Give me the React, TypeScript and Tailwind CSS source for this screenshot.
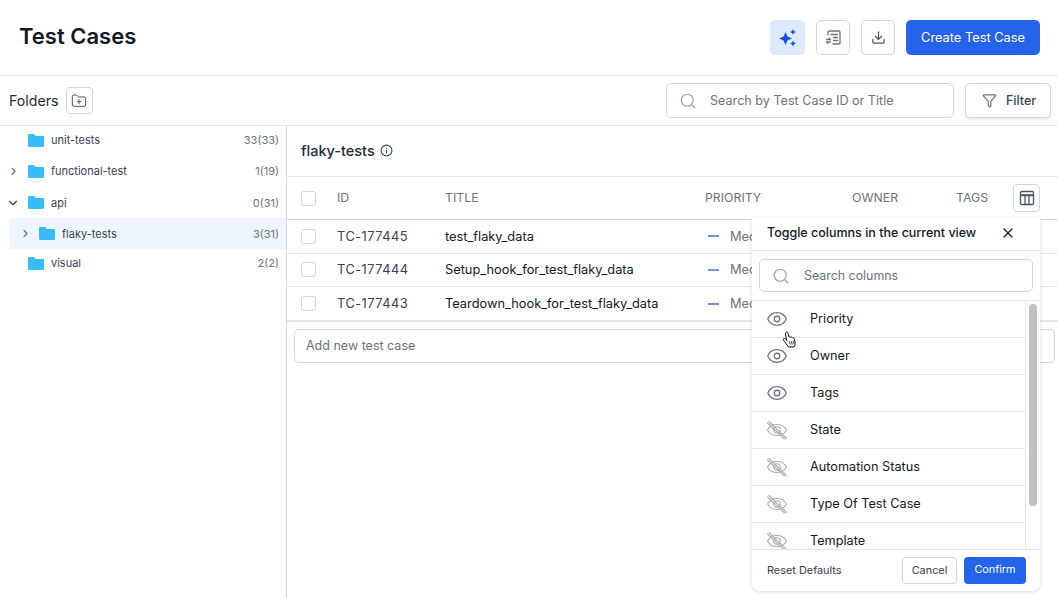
import type { FC, ReactNode } from 'react';
import { ChevronDown, ChevronRight, Download, Eye, Filter, FolderPlus, Info, Search, X } from 'lucide-react';

const folders = [
  { name: 'unit-tests', count: '33(33)', arrow: null, depth: 0 },
  { name: 'functional-test', count: '1(19)', arrow: 'right', depth: 0 },
  { name: 'api', count: '0(31)', arrow: 'down', depth: 0 },
  { name: 'flaky-tests', count: '3(31)', arrow: 'right', depth: 1 },
  { name: 'visual', count: '2(2)', arrow: null, depth: 0 },
];

const cases = [
  { id: 'TC-177445', title: 'test_flaky_data' },
  { id: 'TC-177444', title: 'Setup_hook_for_test_flaky_data' },
  { id: 'TC-177443', title: 'Teardown_hook_for_test_flaky_data' },
];

const columns = [
  { name: 'Priority', on: true },
  { name: 'Owner', on: true },
  { name: 'Tags', on: true },
  { name: 'State', on: false },
  { name: 'Automation Status', on: false },
  { name: 'Type Of Test Case', on: false },
  { name: 'Template', on: false },
];

const FolderIcon: FC = () => (
  <svg width="18" height="15" viewBox="0 0 18 15" className="shrink-0">
    <path d="M1 2.200C1 1.500 1.500 1 2.200 1h4.400c.4 0 .7.2.9.4L9 3h6.800c.7 0 1.200.5 1.200 1.200v8.600c0 .7-.5 1.200-1.200 1.200H2.200C1.500 14 1 13.500 1 12.800z" fill="#38bdf8" />
  </svg>
);

const Sparkle: FC = () => (
  <svg width="20" height="20" viewBox="0 0 20 20" fill="#1d4ed8">
    <path d="M7.500 4l1.900 4.600L14 10.500l-4.600 1.900L7.500 17l-1.900-4.600L1 10.500l4.600-1.900z" />
    <path d="M15 1l.9 2.100 2.100.9-2.100.9-.9 2.100-.9-2.100-2.100-.9 2.100-.9z" />
    <path d="M15 12.500l.9 2.100 2.100.9-2.100.9-.9 2.100-.9-2.100-2.100-.9 2.100-.9z" />
  </svg>
);

const ReportIcon: FC = () => (
  <svg width="17" height="17" viewBox="0 0 17 17" fill="none" stroke="#6b7280" strokeWidth="1.300" strokeLinecap="round" strokeLinejoin="round">
    <path d="M3 6V3.200C3 2.500 3.500 2 4.200 2h9.600c.7 0 1.200.5 1.200 1.200v10.600c0 .7-.5 1.200-1.200 1.200H8" />
    <path d="M6 5.500h6.500M8.500 8.500h4M8.500 11.500h4" />
    <path d="M1.500 10.500h4l-1.300-1.300M5.500 13h-4l1.300 1.300" />
  </svg>
);

const TableIcon: FC = () => (
  <svg width="16" height="16" viewBox="0 0 16 16" fill="none" stroke="#4b5563" strokeWidth="1.300">
    <rect x="1.500" y="1.500" width="13" height="13" rx="1.200" />
    <path d="M1.500 5.200h13" strokeWidth="2" />
    <path d="M6 5.200v9.300M10 5.200v9.300" />
  </svg>
);

const EyeOffIcon: FC = () => (
  <svg width="22" height="20" viewBox="0 0 22 20" fill="none" stroke="#a8adb7" strokeWidth="1.100" strokeLinecap="round">
    <path d="M1.500 10C3.500 6.300 7 4.500 11 4.500s7.500 1.800 9.500 5.500c-2 3.700-5.500 5.500-9.500 5.500S3.500 13.700 1.500 10z" />
    <circle cx="11" cy="10" r="3.200" />
    <path d="M3 1.500l17.500 17M1.500 3l17 16" />
  </svg>
);

const HandCursor: FC = () => (
  <svg width="15" height="19" viewBox="0 0 15 19" fill="#fff" stroke="#111" strokeWidth="1" strokeLinejoin="round" className="absolute left-[782px] top-[331px]">
    <path d="M4 1.200c.8-.5 1.800 0 2 .9l1 4 .4-.2c.6-.3 1.300 0 1.500.5.500-.4 1.300-.2 1.600.4.600-.3 1.300 0 1.500.6l1 3.600c.4 1.800 0 3.500-1 5H6.500L2.800 11c-.5-.8-1.700-2-1.500-2.900.2-.7 1.300-.8 2-.2l1.400 1.300L3.400 2.800c-.1-.6.100-1.300.6-1.600z" />
    <path d="M7.500 10.500l.5 3M9.500 10l.6 3.500M11.500 10l.6 3.500" strokeWidth="0.800" />
  </svg>
);

const Checkbox: FC = () => <span className="block w-[15px] h-[15px] rounded-[3px] border border-[#d1d5db] bg-white" />;

const IconButton: FC<{ children: ReactNode }> = ({ children }) => (
  <button className="w-[34px] h-[35px] rounded-[5px] border border-[#d1d5db] bg-white flex items-center justify-center text-[#4b5563]">
    {children}
  </button>
);

const TestRow: FC<{ id: string; title: string }> = ({ id, title }) => (
  <div className="grid grid-cols-[36px_108px_260px_1fr] items-center pl-[14px] h-[33.500px] last:h-[33px] border-b border-[#e5e7eb] last:border-b-0 text-[12.800px]">
    <Checkbox />
    <span className="text-[#374151] tracking-[0.5px]">{id}</span>
    <span className="text-[#111827]">{title}</span>
    <span className="flex items-center text-[#6b7280]">
      <span className="w-[11px] h-[2px] ml-[3px] mr-[11px] bg-[#6f94e0]" />
      Medium
    </span>
  </div>
);

export default function App() {
  return (
    <div className="relative w-[1058px] h-[598px] overflow-hidden bg-white font-['Inter',sans-serif] text-[#111827]">
      <header className="h-[76px] flex items-center justify-between pl-[19px] pr-[18px] border-b border-[#e5e7eb]">
        <h1 className="text-[22px] font-semibold mb-[2px]">Test Cases</h1>
        <div className="flex items-center gap-[11px]">
          <button className="w-[35px] h-[35px] rounded-[5px] bg-[#dbeafe] flex items-center justify-center">
            <Sparkle />
          </button>
          <IconButton>
            <ReportIcon />
          </IconButton>
          <IconButton>
            <Download size={15} />
          </IconButton>
          <button className="w-[134px] h-[35px] rounded-[5px] bg-[#2563eb] text-white text-[12.800px] font-normal">
            Create Test Case
          </button>
        </div>
      </header>

      <div className="h-[50px] flex items-center justify-between pl-[9px] pr-[7px] border-b border-[#e5e7eb]">
        <div className="flex items-center gap-[7px]">
          <span className="text-[14.200px] text-[#1f2937]">Folders</span>
          <button className="w-[27px] h-[27px] rounded-[4px] border border-[#d1d5db] flex items-center justify-center text-[#4b5563]">
            <FolderPlus size={16} strokeWidth={1.5} />
          </button>
        </div>
        <div className="flex items-center gap-[11px]">
          <div className="w-[288px] h-[35px] rounded-[5px] border border-[#d1d5db] flex items-center pl-[12px] gap-[13px]">
            <Search size={18} className="text-[#9ca3af]" strokeWidth={1.6} />
            <span className="text-[12.600px] text-[#6b7280] pt-[1px]">Search by Test Case ID or Title</span>
          </div>
          <button className="w-[86px] h-[35px] rounded-[5px] border border-[#d1d5db] shadow-sm flex items-center pl-[16px] gap-[9px] text-[12.500px] font-medium text-[#374151]">
            <Filter size={15} className="text-[#6b7280]" />
            <span className="pt-[1px]">Filter</span>
          </button>
        </div>
      </div>

      <div className="flex h-[472px]">
        <aside className="w-[287px] shrink-0 border-r border-[#d1d5db] pl-[9px] -mt-[1px]">
          {folders.map((f) => {
            const active = f.name === 'flaky-tests';
            return (
              <div
                key={f.name}
                className={`flex items-center h-[31px] last:-mt-[1px] pr-[7px] rounded-l-[4px] ${active ? 'bg-[#eff6ff]' : ''}`}
              >
                <span className={`${f.depth ? 'w-[29px] pl-[10px]' : 'w-[18px]'} shrink-0 text-[#6b7280]`}>
                  {f.arrow === 'right' && <ChevronRight size={13} className={f.depth ? '' : '-ml-[2px]'} />}
                  {f.arrow === 'down' && <ChevronDown size={14} className="-ml-[3px] text-[#374151]" />}
                </span>
                <FolderIcon />
                <span className={`ml-[6px] text-[11px] text-[#374151] ${f.arrow === 'down' || f.depth ? 'pt-[1px]' : ''}`}>{f.name}</span>
                <span className={`ml-auto text-[11px] text-[#6b7280] ${f.arrow === 'down' || f.depth ? 'pt-[1px]' : ''}`}>{f.count}</span>
              </div>
            );
          })}
        </aside>

        <main className="flex-1 min-w-0">
          <div className="h-[51px] flex items-center gap-[5px] pl-[14px] pb-[1px] border-b border-[#e5e7eb]">
            <span className="text-[14.500px] font-medium text-[#1f2937]">flaky-tests</span>
            <Info size={13} className="text-[#374151]" />
          </div>
          <div className="grid grid-cols-[36px_108px_260px_147px_104px_57px_27px] items-center pl-[14px] h-[43px] border-b border-[#d1d5db] text-[12.300px] text-[#6b7280]">
            <Checkbox />
            <span>ID</span>
            <span>TITLE</span>
            <span>PRIORITY</span>
            <span>OWNER</span>
            <span>TAGS</span>
            <button className="w-[27px] h-[28px] rounded-[4px] border border-[#d1d5db] flex items-center justify-center">
              <TableIcon />
            </button>
          </div>
          <div className="border-b-2 border-[#e5e7eb]">
            {cases.map((c) => (
              <TestRow key={c.id} id={c.id} title={c.title} />
            ))}
          </div>
          <div className="mt-[7px] ml-[7px] w-[761px] h-[34px] rounded-[5px] border border-[#d1d5db] flex items-center pl-[11px] text-[12.500px] text-[#6b7280]">
            Add new test case
          </div>
        </main>
      </div>

      <div className="absolute left-[752px] top-[218px] w-[288px] h-[373px] rounded-b-[8px] bg-white shadow-[0_1px_4px_rgba(0,0,0,0.14)] flex flex-col">
        <div className="h-[33px] shrink-0 flex items-center justify-between pl-[15px] pr-[24px] pb-[2px] border-b border-[#e5e7eb]">
          <span className="text-[12.500px] font-medium text-[#111827]">Toggle columns in the current view</span>
          <X size={16} className="text-[#1f2937]" />
        </div>
        <div className="h-[50px] shrink-0 flex items-center px-[7px] border-b border-[#e5e7eb]">
          <div className="w-full h-[33px] rounded-[5px] border border-[#d1d5db] flex items-center pl-[12px] gap-[14px]">
            <Search size={18} className="text-[#9ca3af]" strokeWidth={1.6} />
            <span className="text-[12.400px] text-[#6b7280] pt-[1px]">Search columns</span>
          </div>
        </div>
        <div className="flex-1 min-h-0 flex overflow-hidden">
          <div className="w-[274px] shrink-0 border-r border-[#e5e7eb] overflow-hidden">
            {columns.map((c) => (
              <div key={c.name} className="h-[37px] shrink-0 flex items-center pl-[14px] border-b border-[#e5e7eb]">
                <span className="w-[44px] shrink-0 flex items-center">
                  {c.on ? <Eye size={22} className="text-[#6b7280]" strokeWidth={1.4} /> : <EyeOffIcon />}
                </span>
                <span className="text-[12.700px] text-[#111827]">{c.name}</span>
              </div>
            ))}
          </div>
          <div className="flex-1 pt-[3px] pl-[3px]">
            <div className="w-[8px] h-[202px] rounded-full bg-[#c1c1c1]" />
          </div>
        </div>
        <div className="h-[42px] shrink-0 flex items-center pl-[15px] pr-[14px] border-t border-[#e5e7eb]">
          <span className="text-[10.900px] text-[#374151] mr-auto">Reset Defaults</span>
          <button className="w-[55px] h-[27px] rounded-[4px] border border-[#d1d5db] text-[10.900px] text-[#374151] mr-[7px]">
            Cancel
          </button>
          <button className="w-[62px] h-[27px] rounded-[4px] bg-[#2563eb] text-[10.800px] text-white">
            Confirm
          </button>
        </div>
      </div>

      <HandCursor />
    </div>
  );
}
